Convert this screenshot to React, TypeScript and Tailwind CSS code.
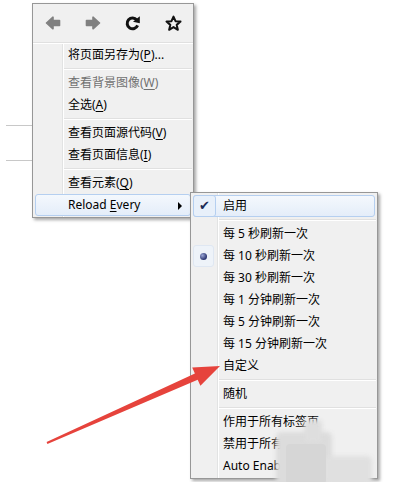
import clsx from "clsx";
import type { ReactNode } from "react";

function Acc({ children }: { children: ReactNode }) {
  return <span className="underline underline-offset-2 decoration-1">{children}</span>;
}

function Item({
  children,
  disabled,
  hot,
  arrow,
  pad,
  mark,
}: {
  children: ReactNode;
  disabled?: boolean;
  hot?: boolean;
  arrow?: boolean;
  pad: string;
  mark?: ReactNode;
}) {
  return (
    <div
      className={clsx(
        "relative mx-[2px] flex h-[22px] items-center rounded-[3px] border whitespace-pre",
        pad,
        hot
          ? "border-[#b5cff0] bg-gradient-to-b from-[#f4f8fd] to-[#e4edf9]"
          : "border-transparent",
        disabled ? "text-[#707070]" : "text-black"
      )}
    >
      {mark}
      <span>{children}</span>
      {arrow && (
        <span className="absolute right-[8px] top-[7px] h-0 w-0 border-y-[4px] border-l-[4px] border-y-transparent border-l-black" />
      )}
    </div>
  );
}

function Sep({ pad }: { pad: string }) {
  return (
    <div className={clsx("flex h-[6px] flex-col justify-center pr-[1px]", pad)}>
      <div className="h-px bg-[#e0e0e0]" />
      <div className="h-px bg-white" />
    </div>
  );
}

function Back({ flip }: { flip?: boolean }) {
  return (
    <svg width="16" height="14" viewBox="0 0 16 14" className={flip ? "-scale-x-100" : ""}>
      <path
        d="M1.5 7 L8 1.2 L8 4.6 L14.5 4.6 L14.5 9.4 L8 9.4 L8 12.8 Z"
        fill="#808080"
        stroke="#808080"
        strokeWidth="1.6"
        strokeLinejoin="round"
      />
    </svg>
  );
}

function Reload() {
  return (
    <svg width="16" height="16" viewBox="0 0 16 16">
      <path
        d="M11.8 5 A5.4 5.4 0 1 0 12.6 10.4"
        fill="none"
        stroke="#111"
        strokeWidth="3"
      />
      <path d="M14.8 1.2 L14.8 8.2 L8 6.8 Z" fill="#111" />
    </svg>
  );
}

function Star() {
  return (
    <svg width="17" height="17" viewBox="0 0 16 16">
      <polygon
        points="8,1.5 9.9,5.8 14.6,6.2 11,9.3 12.1,13.9 8,11.4 3.9,13.9 5,9.3 1.4,6.2 6.1,5.8"
        fill="none"
        stroke="#111"
        strokeWidth="1.9"
        strokeLinejoin="round"
      />
    </svg>
  );
}

export default function App() {
  const m1 = "pl-[32px]";
  const m2 = "pl-[29px]";
  return (
    <div className="relative h-[482px] w-[394px] overflow-hidden bg-white font-['Noto_Sans','Noto_Sans_CJK_SC',sans-serif] text-[12px]">
      {/* page behind the menu */}
      <div className="flex flex-col gap-[34px] pl-[6px] pt-[125px]">
        <div className="h-px w-[28px] bg-[#c8c8c8]" />
        <div className="h-px w-[28px] bg-[#c8c8c8]" />
      </div>

      {/* context menu */}
      <div className="absolute left-[32px] top-[3px] w-[162px] border border-[#979797] bg-[#f0f0f0] pb-[1px] shadow-[2px_2px_3px_rgba(0,0,0,0.35)]">
        <div className="absolute bottom-0 left-[29px] top-[40px] w-[2px] border-l border-[#e2e3e3] bg-white" />
        <div className="grid h-[38px] grid-cols-4 place-items-center">
          <Back />
          <Back flip />
          <Reload />
          <Star />
        </div>
        <div className="h-px bg-[#e0e0e0]" />
        <div className="h-px bg-white" />
        <Item pad={m1}>
          将页面另存为(<Acc>P</Acc>)...
        </Item>
        <Sep pad="pl-[31px]" />
        <Item pad={m1} disabled>
          查看背景图像(<Acc>W</Acc>)
        </Item>
        <Item pad={m1}>
          全选(<Acc>A</Acc>)
        </Item>
        <Sep pad="pl-[31px]" />
        <Item pad={m1}>
          查看页面源代码(<Acc>V</Acc>)
        </Item>
        <Item pad={m1}>
          查看页面信息(<Acc>I</Acc>)
        </Item>
        <Sep pad="pl-[31px]" />
        <Item pad={m1}>
          查看元素(<Acc>Q</Acc>)
        </Item>
        <Item pad={m1} hot arrow>
          {"Reload "}
          <Acc>E</Acc>very
        </Item>
      </div>

      {/* submenu */}
      <div className="absolute left-[190px] top-[192px] w-[188px] border border-[#979797] bg-[#f0f0f0] pb-[1px] pt-[2px] shadow-[2px_2px_3px_rgba(0,0,0,0.35)]">
        <div className="absolute bottom-0 left-[26px] top-0 w-[2px] border-l border-[#e2e3e3] bg-white" />
        <Item
          pad={m2}
          hot
          mark={
            <span className="absolute -left-px -top-px flex h-[22px] w-[23px] items-center justify-center rounded-[3px] border border-[#b5cff0] bg-[#e8f0fa] text-[13px] text-[#1b2a55]">
              ✔
            </span>
          }
        >
          启用
        </Item>
        <Sep pad="pl-[28px]" />
        <Item pad={m2}>每 5 秒刷新一次</Item>
        <Item
          pad={m2}
          mark={
            <span className="absolute -left-px -top-px flex h-[22px] w-[21px] items-center justify-center rounded-[3px] border border-[#dfe7f2] bg-[#eef3f9]">
              <span className="h-[7px] w-[7px] rounded-full bg-[radial-gradient(circle_at_35%_35%,#9aa6d6,#2a3470_70%)]" />
            </span>
          }
        >
          每 10 秒刷新一次
        </Item>
        <Item pad={m2}>每 30 秒刷新一次</Item>
        <Item pad={m2}>每 1 分钟刷新一次</Item>
        <Item pad={m2}>每 5 分钟刷新一次</Item>
        <Item pad={m2}>每 15 分钟刷新一次</Item>
        <Item pad={m2}>自定义</Item>
        <Sep pad="pl-[28px]" />
        <Item pad={m2}>随机</Item>
        <Sep pad="pl-[28px]" />
        <Item pad={m2}>作用于所有标签页</Item>
        <Item pad={m2}>禁用于所有标签页</Item>
        <Item pad={m2}>Auto Enable</Item>
      </div>

      {/* watermark blur */}
      <div className="absolute left-[276px] top-[432px] h-[56px] w-[56px] rounded-[5px] bg-[#dcdcdc] blur-[2px]" />
      <div className="absolute left-[324px] top-[456px] h-[30px] w-[48px] rounded-[5px] bg-[#e0e0e0] blur-[2px]" />
      <div className="absolute left-[304px] top-[420px] h-[22px] w-[18px] rounded-[4px] bg-[#dedede] blur-[2px]" />
      <div className="absolute left-[286px] top-[444px] h-[40px] w-[40px] rounded-[4px] bg-[#d6d6d6]" />

      {/* red arrow */}
      <svg className="absolute left-0 top-0" width="394" height="482" viewBox="0 0 394 482">
        <polygon
          points="47.4,443.9 46.6,442.1 194.9,373.4 192.2,367.5 220,366 200.4,385.7 197.7,379.8"
          fill="#e6433c"
        />
      </svg>
    </div>
  );
}
